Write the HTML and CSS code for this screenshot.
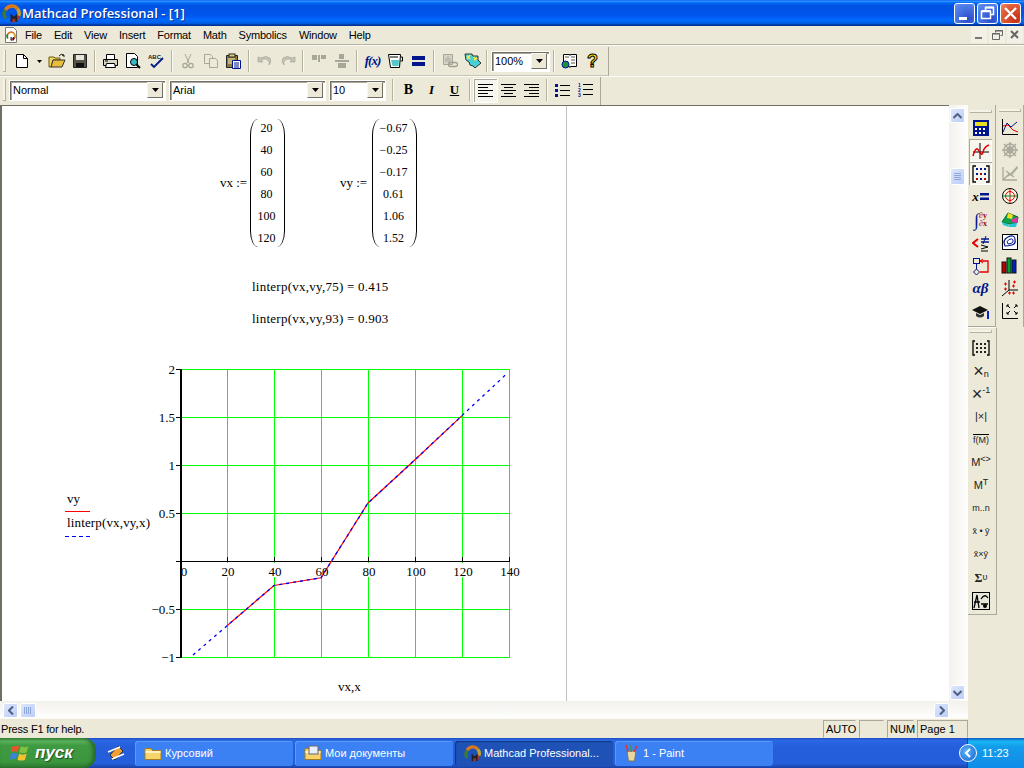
FILE: index.html
```html
<!DOCTYPE html>
<html lang="en">
<head>
  <meta charset="UTF-8">
  <title>Mathcad Professional - [1]</title>
  <link rel="stylesheet" href="styles.css">
</head>
<body>
<svg class="defs" width="0" height="0">
  <symbol id="logo" viewBox="0 0 16 16">
    <path d="M3 12A6 6 0 0 1 3 5" fill="none" stroke="#3a7d2c" stroke-width="3"/>
    <path d="M3 5A6 6 0 0 1 13 4" fill="none" stroke="#d9791e" stroke-width="3"/>
    <path d="M13 4A6 6 0 0 1 14 10" fill="none" stroke="#c9a227" stroke-width="3"/>
    <path d="M14 10A6 6 0 0 1 8 14" fill="none" stroke="#a33" stroke-width="3"/>
    <path d="M8 15V10L10 12L12 10V15" fill="none" stroke="#222" stroke-width="1.6"/>
  </symbol>
  <symbol id="folder" viewBox="0 0 18 16">
    <path d="M1 3.500h6l1.500 2h8.500v9h-16z" fill="#f6d36b" stroke="#a67c1e"/>
    <path d="M1.500 7h15" stroke="#fff2bf" stroke-width="2"/>
  </symbol>
</svg>

<div class="window">
  <!-- Barre de titre -->
  <div class="titlebar">
    <svg class="title-logo" width="19" height="19"><use href="#logo"/></svg>
    <span class="title-text">Mathcad Professional - [1]</span>
    <div class="title-btns">
      <div class="cap-btn"><svg width="21" height="21"><rect x="5" y="14" width="8" height="3" fill="#fff"/></svg></div>
      <div class="cap-btn"><svg width="21" height="21"><path d="M8.500 7.500v-3h8v7h-3M4.500 8.500h9v7h-9z" fill="none" stroke="#fff" stroke-width="1.500"/><path d="M4.500 8h9M8.500 4.500h8" stroke="#fff" stroke-width="2"/></svg></div>
      <div class="cap-btn cap-close"><svg width="21" height="21"><path d="M5 5L16 16M16 5L5 16" stroke="#fff" stroke-width="2.400"/></svg></div>
    </div>
  </div>

  <!-- Menu -->
  <div class="menubar">
    <div class="doc-icon"><svg width="12" height="16"><path d="M.5.500h8l3 3v12h-11z" fill="#fff" stroke="#777"/><use href="#logo" x="1" y="4" width="10" height="10"/></svg></div>
    <span class="menu-item">File</span>
    <span class="menu-item">Edit</span>
    <span class="menu-item">View</span>
    <span class="menu-item">Insert</span>
    <span class="menu-item">Format</span>
    <span class="menu-item">Math</span>
    <span class="menu-item">Symbolics</span>
    <span class="menu-item">Window</span>
    <span class="menu-item">Help</span>
    <div class="mdi-btns">
      <div class="mdi-btn"><svg width="16" height="16"><rect x="4" y="10" width="7" height="2" fill="#777"/></svg></div>
      <div class="mdi-btn"><svg width="16" height="16"><path d="M6.500 5.500v-2h7v5h-2M3.500 6.500h7v6h-7z" fill="none" stroke="#666"/><path d="M3 7h8M6 4h8" stroke="#666"/></svg></div>
      <div class="mdi-btn"><svg width="16" height="16"><path d="M4 4L11 11M11 4L4 11" stroke="#666" stroke-width="2"/></svg></div>
    </div>
  </div>

  <!-- Barre standard -->
  <div class="toolrow row-one">
    <div class="toolbar tb-standard">
      <div class="grip"></div>
      <div class="tool"><svg width="16" height="16"><path d="M2.500 1.500h7l4 4v9h-11z" fill="#fff" stroke="#000"/><path d="M9.500 1.500v4h4" fill="none" stroke="#000"/></svg></div>
      <div class="tool-arrow"><svg width="5" height="3"><path d="M0 0h5L2.500 3z"/></svg></div>
      <div class="tool"><svg width="18" height="16"><path d="M1 4h5l1 1h5v2H5L3 14H1z" fill="#f6d55c" stroke="#6b5a10"/><path d="M3 14l2-7h12l-3 7z" fill="#e8bd3a" stroke="#333"/><path d="M11 3Q13 0 16 2M16 2l-2 .4M16 2v2" fill="none" stroke="#222"/></svg></div>
      <div class="tool"><svg width="16" height="16"><path d="M1.500 1.500h13v13h-13z" fill="#57544a" stroke="#222"/><rect x="4" y="2" width="8" height="5" fill="#e8e6d8"/><rect x="4" y="10" width="8" height="4" fill="#111"/></svg></div>
      <div class="sep"></div>
      <div class="tool"><svg width="17" height="16"><path d="M4.500 1.500h8v5h-8z" fill="#fff" stroke="#000"/><path d="M1.500 6.500h14v6h-14z" fill="#d9d6c8" stroke="#000"/><path d="M4.500 10.500h8l1 4h-10z" fill="#fff" stroke="#000"/><path d="M3 8h3" stroke="#000"/></svg></div>
      <div class="tool"><svg width="17" height="16"><path d="M1.500 .5h8l3 3v11h-11z" fill="#fff" stroke="#000"/><circle cx="9" cy="9" r="3.500" fill="#37b8c4" stroke="#000"/><path d="M11.500 11.500l3.500 3.500" stroke="#000" stroke-width="2"/></svg></div>
      <div class="tool"><svg width="17" height="16"><text class="abc" x="0" y="6">ABC</text><path d="M3 11l3 3 9-9" fill="none" stroke="#001b8a" stroke-width="1.800"/></svg></div>
      <div class="sep"></div>
      <div class="tool"><svg width="16" height="16"><path d="M5 1l4 9M11 1L7 10" stroke="#a8a698" fill="none"/><circle cx="5" cy="12.500" r="2.200" fill="none" stroke="#a8a698" stroke-width="1.300"/><circle cx="11" cy="12.500" r="2.200" fill="none" stroke="#a8a698" stroke-width="1.300"/></svg></div>
      <div class="tool"><svg width="16" height="16"><path d="M1.500 1.500h6l2 2v7h-8z" fill="#ece9d8" stroke="#a8a698"/><path d="M6.500 5.500h6l2 2v7h-8z" fill="#ece9d8" stroke="#a8a698"/></svg></div>
      <div class="tool"><svg width="17" height="17"><path d="M1.500 2.500h11v12h-11z" fill="#8c7a3a" stroke="#222"/><rect x="4" y="1" width="6" height="3" fill="#e0d27a" stroke="#222"/><rect x="3" y="5" width="7" height="6" fill="#c2b477"/><path d="M7.500 7.500h8v8h-8z" fill="#fff" stroke="#00148c"/><path d="M9 10h5M9 12h5M9 14h5" stroke="#00148c" stroke-width="1.200"/></svg></div>
      <div class="sep"></div>
      <div class="tool"><svg width="16" height="14"><path d="M1 3v5h5L4 6q4-2 7 0 2 2 1 5 3-3 1-7-4-3-9 0z" fill="#c6c4b6" stroke="#a09e90" stroke-width=".6"/></svg></div>
      <div class="tool"><svg width="16" height="14"><path d="M15 3v5h-5l2-2q-4-2-7 0-2 2-1 5-3-3-1-7 4-3 9 0z" fill="#c6c4b6" stroke="#a09e90" stroke-width=".6"/></svg></div>
      <div class="sep"></div>
      <div class="tool"><svg width="16" height="14"><path d="M1 1h5v5H1zM7 1h2v7H7zM10 1h5v4h-5z" fill="#a8a698"/></svg></div>
      <div class="tool"><svg width="16" height="16"><path d="M5 1h5v5H5zM1 7h14v2H1zM4 10h8v5H4z" fill="#a8a698"/></svg></div>
      <div class="sep"></div>
      <div class="tool"><span class="fx">f(x)</span></div>
      <div class="tool"><svg width="17" height="16"><path d="M1.500 1.500h12l-1 13h-9z" fill="#fff" stroke="#000"/><path d="M13.500 4h2v4h-2" fill="none" stroke="#000"/><path d="M4 7h8l-.5 6h-6z" fill="#52c8c8"/><path d="M3 4h8" stroke="#000"/></svg></div>
      <div class="tool"><svg width="14" height="12"><rect y="1" width="13" height="4" fill="#00148c"/><rect y="7" width="13" height="4" fill="#00148c"/></svg></div>
      <div class="sep"></div>
      <div class="tool"><svg width="16" height="16"><path d="M1.500 1.500h9v10h-9z" fill="#d5d3c5" stroke="#a8a698"/><path d="M5 4h2M3 6h6M3 8h6" stroke="#a8a698"/><rect x="6.500" y="9.500" width="9" height="4" rx="2" fill="none" stroke="#a09e90" stroke-width="1.300"/></svg></div>
      <div class="tool"><svg width="18" height="16"><path d="M1 1h7l1 2h5v4l3 3-6 5-2-2-3-1-1-3-3-2z" fill="#45d0d8" stroke="#333"/><path d="M3 3l3 3M6 2L3 6M10 4l2 3M10 7l3-2" stroke="#ffe23c" stroke-width="1.600"/></svg></div>
      <div class="sep sep-zoom"></div>
      <div class="combo combo-zoom"><span class="combo-value">100%</span><div class="combo-btn"><svg width="7" height="4"><path d="M0 0h7L3.500 4z"/></svg></div></div>
      <div class="sep sep-after"></div>
      <div class="tool"><svg width="17" height="16"><path d="M2.500 1.500h6l.5 1 .5-1h6v12h-6l-.500 1-.500-1h-6z" fill="#fff" stroke="#000"/><path d="M10 4h4M10 7h4M10 10h4M4 4h4" stroke="#555"/><circle cx="4.500" cy="11.500" r="3.500" fill="#1a8f3c" stroke="#00148c"/></svg></div>
      <div class="tool"><span class="help-q">?</span></div>
    </div>
  </div>

  <!-- Barre de formatage -->
  <div class="toolrow row-two">
    <div class="toolbar tb-format">
      <div class="grip"></div>
      <div class="combo combo-style"><span class="combo-value">Normal</span><div class="combo-btn"><svg width="7" height="4"><path d="M0 0h7L3.500 4z"/></svg></div></div>
      <div class="combo combo-style"><span class="combo-value">Arial</span><div class="combo-btn"><svg width="7" height="4"><path d="M0 0h7L3.500 4z"/></svg></div></div>
      <div class="combo combo-size"><span class="combo-value">10</span><div class="combo-btn"><svg width="7" height="4"><path d="M0 0h7L3.500 4z"/></svg></div></div>
      <div class="sep"></div>
      <div class="tool"><span class="fmt fmt-b">B</span></div>
      <div class="tool"><span class="fmt fmt-i">I</span></div>
      <div class="tool"><span class="fmt fmt-u">U</span></div>
      <div class="sep"></div>
      <div class="tool tool-on"><svg width="15" height="13"><path d="M0 .5h15M0 3.500h10M0 6.500h15M0 9.500h10M0 12.500h15" stroke="#000"/></svg></div>
      <div class="tool"><svg width="15" height="13"><path d="M0 .5h15M3 3.500h9M0 6.500h15M3 9.500h9M0 12.500h15" stroke="#000"/></svg></div>
      <div class="tool"><svg width="15" height="13"><path d="M0 .5h15M5 3.500h10M0 6.500h15M5 9.500h10M0 12.500h15" stroke="#000"/></svg></div>
      <div class="sep"></div>
      <div class="tool"><svg width="15" height="13"><path d="M0 0h3v3H0zM0 5h3v3H0zM0 10h3v3H0z" fill="#00148c"/><path d="M5 1.500h10M5 6.500h10M5 11.500h10" stroke="#000"/></svg></div>
      <div class="tool"><svg width="15" height="14"><text class="num-list" x="0" y="4">1</text><text class="num-list" x="0" y="9">2</text><text class="num-list" x="0" y="14">3</text><path d="M5 1.500h10M5 6.500h10M5 11.500h10" stroke="#000"/></svg></div>
    </div>
  </div>

  <div class="main">
    <div class="main-left">
      <div class="workspace">
        <div class="doc">
          <div class="region region-vx">
            <span class="assign">vx :=</span>
            <div class="matrix matrix-vx">
              <div class="paren paren-l"></div>
              <div class="cells">
                <span>20</span><span>40</span><span>60</span><span>80</span><span>100</span><span>120</span>
              </div>
              <div class="paren paren-r"></div>
            </div>
          </div>
          <div class="region region-vy">
            <span class="assign">vy :=</span>
            <div class="matrix matrix-vy">
              <div class="paren paren-l"></div>
              <div class="cells">
                <span>−0.67</span><span>−0.25</span><span>−0.17</span><span>0.61</span><span>1.06</span><span>1.52</span>
              </div>
              <div class="paren paren-r"></div>
            </div>
          </div>
          <div class="expr expr-one">linterp(vx,vy,75) = 0.415</div>
          <div class="expr expr-two">linterp(vx,vy,93) = 0.903</div>

          <!-- Graphique : les coordonnées du viewBox sont celles de l'écran -->
          <svg class="plot" width="500" height="345" viewBox="50 360 500 345">
            <g class="grid" shape-rendering="crispEdges">
              <path d="M180 369.500H509.500M180 417.500H509.500M180 465.500H509.500M180 513.500H509.500M180 609.500H509.500M180 657.500H509.500"/>
              <path d="M227.500 369V657M274.500 369V657M321.500 369V657M368.500 369V657M415.500 369V657M462.500 369V657M509.500 369V657"/>
            </g>
            <g class="axis" shape-rendering="crispEdges">
              <path class="axis-y" d="M181 369V658"/>
              <path d="M176 369.500H181M176 417.500H181M176 465.500H181M176 513.500H181M176 609.500H181M176 657.500H181"/>
              <path d="M176 561.500H509.500"/>
              <path d="M227.500 557V562M274.500 557V562M321.500 557V562M368.500 557V562M415.500 557V562M462.500 557V562M509.500 557V562"/>
            </g>
            <g class="x-back">
              <rect x="218" y="563" width="20" height="14"/><rect x="265" y="563" width="20" height="14"/>
              <rect x="312" y="563" width="20" height="14"/><rect x="359" y="563" width="20" height="14"/>
              <rect x="403" y="563" width="26" height="14"/><rect x="450" y="563" width="26" height="14"/>
            </g>
            <polyline class="trace-red" points="227,625.800 274,585.500 321,577.800 368,503 415,459.700 462,415.600"/>
            <polyline class="trace-blue" points="193,655 227,625.800 274,585.500 321,577.800 368,503 415,459.700 462,415.600 507,373.500"/>
            <g class="plot-text y-labels">
              <text x="175" y="374">2</text><text x="175" y="422">1.5</text><text x="175" y="470">1</text>
              <text x="175" y="518">0.5</text><text x="175" y="614">−0.5</text><text x="175" y="662">−1</text>
            </g>
            <g class="plot-text x-labels">
              <text x="184" y="576">0</text><text x="228" y="576">20</text><text x="275" y="576">40</text>
              <text x="322" y="576">60</text><text x="369" y="576">80</text><text x="416" y="576">100</text>
              <text x="463" y="576">120</text><text x="510" y="576">140</text>
            </g>
            <text class="plot-text" x="67" y="503">vy</text>
            <path class="legend-red" d="M65 511.500H90"/>
            <text class="plot-text legend-name" x="67" y="527">linterp(vx,vy,x)</text>
            <path class="legend-blue" d="M65 536.500H90"/>
            <text class="plot-text" x="338" y="691">vx,x</text>
          </svg>
        </div>
        <div class="vscroll">
          <div class="sb-btn"><svg width="9" height="6"><path d="M.5 5L4.500 1L8.500 5" fill="none" stroke="#4d6185" stroke-width="2"/></svg></div>
          <div class="sb-thumb thumb-v"><svg width="7" height="8"><path d="M0 .5h7M0 2.500h7M0 4.500h7M0 6.500h7" stroke="#8fa6d8"/></svg></div>
          <div class="sb-btn btn-down"><svg width="9" height="6"><path d="M.5 1L4.500 5L8.500 1" fill="none" stroke="#4d6185" stroke-width="2"/></svg></div>
        </div>
      </div>
      <div class="hscroll">
        <div class="sb-btn"><svg width="6" height="9"><path d="M5 .5L1 4.500L5 8.500" fill="none" stroke="#4d6185" stroke-width="2"/></svg></div>
        <div class="sb-thumb thumb-h"><svg width="8" height="7"><path d="M.5 0v7M2.500 0v7M4.500 0v7M6.500 0v7" stroke="#8fa6d8"/></svg></div>
        <div class="sb-btn btn-right"><svg width="6" height="9"><path d="M1 .5L5 4.500L1 8.500" fill="none" stroke="#4d6185" stroke-width="2"/></svg></div>
      </div>
      <div class="statusbar">
        <span class="status-msg">Press F1 for help.</span>
        <span class="panel panel-auto">AUTO</span>
        <span class="panel panel-blank"></span>
        <span class="panel panel-num">NUM</span>
        <span class="panel panel-page">Page 1</span>
      </div>
    </div>

    <!-- Barres flottantes à droite -->
    <div class="side">
      <div class="side-top">
        <div class="palette">
          <div class="pal-grip"></div>
          <div class="pal-btn"><svg width="18" height="18"><rect x="1" y="1" width="16" height="16" fill="#00148c"/><rect x="3" y="3" width="12" height="4" fill="#e8e020"/><path d="M3 9h2v2H3zM7 9h2v2H7zM11 9h2v2h-2zM3 13h2v2H3zM7 13h2v2H7zM11 13h2v2h-2z" fill="#fff"/></svg></div>
          <div class="pal-btn pal-on"><svg width="18" height="18"><path d="M8 1V17M1 10H17" stroke="#000"/><path d="M1 14Q4 3 7 9T11 10 17 3" fill="none" stroke="#e00000" stroke-width="1.500"/></svg></div>
          <div class="pal-btn pal-on"><svg width="18" height="18"><path d="M4 1H1V17H4M14 1H17V17H14" fill="none" stroke="#000" stroke-width="1.300"/><path d="M4 3h2v2H4zM8 3h2v2H8zM12 3h2v2h-2zM4 8h2v2H4zM12 8h2v2h-2zM8 13h2v2H8z" fill="#00148c"/><path d="M8 8h2v2H8zM4 13h2v2H4zM12 13h2v2h-2z" fill="#b00000"/></svg></div>
          <div class="pal-btn"><span class="pal-xeq">x</span><svg width="9" height="7"><rect width="9" height="2.500" fill="#00148c"/><rect y="4.500" width="9" height="2.500" fill="#00148c"/></svg></div>
          <div class="pal-btn"><span class="pal-int">∫</span><span class="pal-frac"><span>∂y</span><span>∂x</span></span></div>
          <div class="pal-btn"><svg width="18" height="18"><path d="M6 5L1 9L6 13" fill="none" stroke="#e00000" stroke-width="2"/><path d="M9 5h8M9 8h8" stroke="#00148c" stroke-width="1.500"/><path d="M14 2L11 10" stroke="#00148c"/><path d="M9 11l7 2-7 2M9 17h7" fill="none" stroke="#000"/></svg></div>
          <div class="pal-btn"><svg width="18" height="18"><rect x="1.500" y="1.500" width="6" height="5" fill="none" stroke="#00148c"/><path d="M4.500 12l3 3-3 3-3-3z" fill="none" stroke="#00148c"/><path d="M4.500 6.500V12" stroke="#00148c"/><path d="M8 4h8V15H8" fill="none" stroke="#e00000" stroke-width="1.300"/><path d="M11 2L8 4L11 6" fill="none" stroke="#e00000"/></svg></div>
          <div class="pal-btn"><span class="pal-greek">αβ</span></div>
          <div class="pal-btn"><svg width="18" height="18"><path d="M0 7L8 3L16 7L8 11z" fill="#111"/><path d="M4 10v3q4 3 8 0v-3l-4 2z" fill="#333"/><path d="M15 8v8h2V8z" fill="#0022cc"/></svg></div>
        </div>
        <div class="palette">
          <div class="pal-grip"></div>
          <div class="pal-btn"><svg width="18" height="18"><path d="M1.500 1V16.500H17" fill="none" stroke="#000"/><path d="M2 14L6 5L10 9L16 4" fill="none" stroke="#00148c"/><path d="M2 8L7 7L12 12L17 14" fill="none" stroke="#e00000"/></svg></div>
          <div class="pal-btn"><svg width="18" height="18"><g fill="none" stroke="#aaa89a" stroke-width="1.300"><circle cx="9" cy="9" r="6"/><circle cx="9" cy="9" r="3"/><path d="M9 1V17M1 9H17M3 3L15 15M15 3L3 15"/></g></svg></div>
          <div class="pal-btn"><svg width="18" height="18"><g fill="none" stroke="#aaa89a" stroke-width="1.300"><path d="M2 3V16H16M2 16L9 9M5 7L13 13M5 13L12 9"/></g><path d="M9 10L16 2L17 4L10 12z" fill="#aaa89a"/></svg></div>
          <div class="pal-btn"><svg width="18" height="18"><circle cx="9" cy="9" r="7.500" fill="#fff8e8" stroke="#000"/><circle cx="9" cy="9" r="4.500" fill="none" stroke="#e00000"/><path d="M9 1.500V16.500" stroke="#e00000"/><path d="M1.500 9H16.500" stroke="#008a20"/></svg></div>
          <div class="pal-btn"><svg width="18" height="18"><path d="M1 12L7 3L17 7L16 13L7 14z" fill="#0fa04a" stroke="#063"/><path d="M7 3L12 5L11 9L6 8z" fill="#f0e020"/><path d="M11 9L17 7L16 13L11 12z" fill="#d83aa0"/><path d="M1 12L7 14L8 17L2 15z" fill="#20c8d8"/><path d="M8 14l8-1-1 4-7 0z" fill="#20c8d8"/></svg></div>
          <div class="pal-btn"><svg width="18" height="18"><rect x="1.500" y="1.500" width="15" height="15" fill="#fff" stroke="#000"/><path d="M4 13Q1 7 7 4T14 6 11 12 4 13z" fill="none" stroke="#00148c" stroke-width="1.200"/><path d="M7 11Q5 8 8 6.500T12 7 10 10.500z" fill="none" stroke="#00148c"/></svg></div>
          <div class="pal-btn"><svg width="18" height="18"><rect x="1" y="6" width="4" height="11" fill="#c00000" stroke="#111"/><rect x="6" y="2" width="4" height="15" fill="#00a030" stroke="#111"/><rect x="11" y="4" width="4" height="13" fill="#0020c0" stroke="#111"/></svg></div>
          <div class="pal-btn"><svg width="18" height="18"><path d="M8 1V11H17M8 11L1 17" fill="none" stroke="#000"/><path d="M3 5h3M4.500 3.500v3M12 3h3M13.500 1.500v3M11 7h3M12.500 5.500v3M3 10h3M4.500 8.500v3M11 14h3M12.500 12.500v3M7 14h3M8.500 12.500v3" stroke="#e00000"/></svg></div>
          <div class="pal-btn"><svg width="18" height="18"><path d="M1.500 1V16.500H17" fill="none" stroke="#000"/><path d="M5 4L8 7M5 4h2M5 4v2M15 4L12 7M15 4h-2M15 4v2M5 13L8 10M5 13h2M5 13v-2M15 13L12 10M15 13h-2M15 13v-2" stroke="#000" fill="none" transform="translate(1 -1)"/></svg></div>
        </div>
      </div>
      <div class="palette palette-matrix">
        <div class="pal-grip"></div>
        <div class="pal-btn"><svg width="18" height="18"><path d="M3 2H1V16H3M15 2H17V16H15" fill="none" stroke="#000" stroke-width="1.300"/><path d="M4 4h2v2H4zM8 4h2v2H8zM12 4h2v2h-2zM4 8h2v2H4zM8 8h2v2H8zM12 8h2v2h-2zM4 12h2v2H4zM8 12h2v2H8zM12 12h2v2h-2z" fill="#222"/></svg></div>
        <div class="pal-btn"><span class="sym sym-big">×</span><sub class="sym-sub">n</sub></div>
        <div class="pal-btn"><span class="sym sym-big">×</span><sup class="sym-sup">-1</sup></div>
        <div class="pal-btn"><span class="sym">|×|</span></div>
        <div class="pal-btn"><span class="sym sym-arrow">f(M)</span></div>
        <div class="pal-btn"><span class="sym">M</span><sup class="sym-sup">&lt;&gt;</sup></div>
        <div class="pal-btn"><span class="sym">M</span><sup class="sym-sup">T</sup></div>
        <div class="pal-btn"><span class="sym sym-small">m..n</span></div>
        <div class="pal-btn"><span class="sym sym-small">x̄ • ȳ</span></div>
        <div class="pal-btn"><span class="sym sym-small">x̄×ȳ</span></div>
        <div class="pal-btn"><span class="sym sym-sigma">Σ</span><span class="sym sym-small">υ</span></div>
        <div class="pal-btn"><svg width="18" height="18"><rect x=".5" y=".5" width="17" height="17" fill="#e8e6d8" stroke="#000"/><path d="M2 16L5 3L7 16M9 7Q13 1 16 6M9 12h7M2 10h6" fill="none" stroke="#000" stroke-width="1.300"/><circle cx="13" cy="14" r="2" fill="#000"/></svg></div>
      </div>
    </div>
  </div>

  <!-- Barre des tâches -->
  <div class="taskbar">
    <div class="start">
      <svg width="20" height="20" viewBox="0 0 24 22"><path d="M2 4Q6 1 11 3L9 10Q5 8 1 10z" fill="#e8552a"/><path d="M13 3Q17 5 22 3L20 10Q16 12 11 10z" fill="#7fc241"/><path d="M1 12Q4 10 9 12L7 19Q3 17 0 19z" fill="#3a82de"/><path d="M11 12Q15 14 20 12L18 19Q14 21 9 19z" fill="#f2c230"/></svg>
      <span class="start-text">пуск</span>
    </div>
    <div class="quick"><svg width="18" height="18"><path d="M3 11L11 2L16 7L8 16z" fill="#f0a030" stroke="#333"/><path d="M1 8L13 3M5 15L17 10" stroke="#fff" stroke-width="1.500"/></svg></div>
    <div class="task"><svg width="18" height="16"><use href="#folder"/></svg><span>Курсовий</span></div>
    <div class="task"><svg width="18" height="16"><use href="#folder"/><rect x="5" y="1" width="9" height="8" fill="#e8eefc" stroke="#667"/></svg><span>Мои документы</span></div>
    <div class="task task-active"><svg width="17" height="17"><use href="#logo"/></svg><span>Mathcad Professional...</span></div>
    <div class="task"><svg width="16" height="18"><path d="M3 7h9l-1.500 10h-6z" fill="#e8d8a0" stroke="#776"/><path d="M4 8L2 1M7 8V1M10 8l3-6" stroke="#d33" stroke-width="1.500"/><path d="M7 8V1" stroke="#2a7" stroke-width="1.500"/></svg><span>1 - Paint</span></div>
    <div class="tray">
      <div class="tray-chevron"><svg width="8" height="10"><path d="M6 1L2 5L6 9" fill="none" stroke="#fff" stroke-width="2"/></svg></div>
      <span class="clock">11:23</span>
    </div>
  </div>
</div>
</body>
</html>
```

FILE: styles.css
```css
* {
  box-sizing: border-box;
}

html, body {
  margin: 0;
  width: 1024px;
  height: 768px;
  overflow: hidden;
}

body {
  font-family: "Liberation Sans", "Noto Sans", sans-serif;
  font-size: 11px;
  color: #000;
  background-color: #ece9d8;
}

.defs {
  position: absolute;
}

svg {
  display: block;
  flex: none;
}

.window {
  display: flex;
  flex-direction: column;
  height: 768px;
}

/* Barre de titre */
.titlebar {
  height: 26px;
  display: flex;
  align-items: center;
  padding-left: 2px;
  flex: none;
  background: linear-gradient(#0058ee 0%, #3593ff 4%, #288eff 6%, #127dff 8%, #036ffc 10%, #0262ee 14%, #0057e5 20%, #0054e3 24%, #0055eb 56%, #005bf5 66%, #026afe 76%, #0062ef 86%, #0052d6 92%, #0040ab 94%, #003092 100%);
}

.title-text {
  margin-left: 1px;
  color: #fff;
  font-family: "Open Sans", sans-serif;
  font-weight: 600;
  font-size: 13px;
  text-shadow: 1px 1px 0 #0f2f8a;
}

.title-btns {
  margin-left: auto;
  margin-right: 3px;
  display: flex;
  gap: 2px;
}

.cap-btn {
  width: 21px;
  height: 21px;
  border: 1px solid #fff;
  border-radius: 3px;
  background: radial-gradient(circle at 70% 80%, #2a4cc8, #4f7de8 70%, #6a92ee);
  display: flex;
  align-items: center;
  justify-content: center;
}

.cap-close {
  background: radial-gradient(circle at 80% 80%, #c33014, #e2603c 70%, #ea8a68);
}

/* Menu */
.menubar {
  height: 20px;
  display: flex;
  align-items: center;
  flex: none;
  padding-left: 5px;
  padding-bottom: 2px;
  border-bottom: 1px solid #fbfaf5;
  box-shadow: inset 0 -1px 0 #b5b2a0;
}

.doc-icon {
  width: 14px;
}

.menu-item {
  padding: 0 6px;
  letter-spacing: -.2px;
}

.mdi-btns {
  margin-left: auto;
  margin-right: 1px;
  display: flex;
  gap: 2px;
}

.mdi-btn {
  width: 16px;
  height: 17px;
  background-color: #f3f1e6;
  display: flex;
  align-items: center;
  justify-content: center;
}

/* Barres d'outils */
.toolrow {
  display: flex;
  flex: none;
}

.row-one {
  height: 30px;
  padding-top: 1px;
}

.row-two {
  height: 29px;
  border-top: 1px solid #fbfaf5;
}

.toolbar {
  display: flex;
  align-items: center;
  height: 100%;
  padding-left: 3px;
  border-right: 1px solid #aca899;
}

.tb-standard {
  width: 609px;
  border-bottom: 1px solid #c8c5b4;
}

.tb-format {
  width: 601px;
  padding-bottom: 2px;
}

.grip {
  width: 3px;
  height: 22px;
  margin-right: 4px;
  background-color: #f5f3e8;
  border-right: 1px solid #b5b2a0;
  border-bottom: 1px solid #b5b2a0;
}

.tb-format .grip {
  margin-right: 3px;
}

.tool {
  width: 23px;
  height: 23px;
  display: flex;
  align-items: center;
  justify-content: center;
  flex: none;
}

.tool-arrow {
  width: 12px;
  display: flex;
  justify-content: center;
  flex: none;
}

.tool-on {
  background-color: #f6f5ee;
  outline: 1px solid #fff;
  box-shadow: inset 1px 1px 0 #aca899;
}

.sep {
  width: 2px;
  height: 22px;
  margin: 0 3px;
  border-left: 1px solid #b5b2a0;
  border-right: 1px solid #fbfaf5;
  flex: none;
}

.sep-zoom {
  margin: 0 3px 0 2px;
}

.sep-after {
  margin: 0 3px 0 3px;
}

.combo {
  height: 21px;
  display: flex;
  align-items: center;
  background-color: #fff;
  border: 1px solid #fff;
  box-shadow: inset 1px 1px 0 #716f64, inset 2px 2px 0 #aca899;
  padding: 2px 2px 2px 2px;
  margin-right: 3px;
  flex: none;
}

.combo-style {
  width: 157px;
}

.combo-size {
  width: 57px;
}

.combo-zoom {
  width: 59px;
  margin-right: 0;
}

.combo-value {
  flex: 1;
  padding-left: 1px;
}

.combo-btn {
  width: 16px;
  height: 16px;
  background-color: #ece9d8;
  border: 1px solid;
  border-color: #f8f7f0 #716f64 #716f64 #f8f7f0;
  display: flex;
  align-items: center;
  justify-content: center;
}

.abc {
  font-size: 6px;
  font-weight: 700;
  fill: #222;
}

.fx {
  font-family: "Liberation Serif", serif;
  font-style: italic;
  font-weight: 700;
  font-size: 13px;
  letter-spacing: -1px;
  color: #00148c;
}

.help-q {
  font-weight: 700;
  font-size: 18px;
  line-height: 1;
  color: #ffe800;
  -webkit-text-stroke: 1px #000;
}

.fmt {
  font-family: "Liberation Serif", serif;
  font-weight: 700;
  font-size: 13px;
}

.fmt-b {
  font-size: 14px;
}

.fmt-i {
  font-style: italic;
}

.fmt-u {
  text-decoration: underline;
}

.num-list {
  font-size: 5px;
  font-weight: 700;
  fill: #00148c;
}

/* Zone principale */
.main {
  flex: 1;
  display: flex;
  min-height: 0;
}

.main-left {
  width: 968px;
  display: flex;
  flex-direction: column;
}

.workspace {
  flex: 1;
  display: flex;
  min-height: 0;
}

.doc {
  flex: 1;
  position: relative;
  overflow: hidden;
  background-color: #fff;
  box-shadow: inset 2px 1px 0 #716f64;
}

/* Limite de page */
.doc::after {
  content: "";
  position: absolute;
  left: 566px;
  top: 1px;
  bottom: 0;
  width: 1px;
  background-color: #c0c0c0;
}

.region, .expr {
  position: absolute;
  font-family: "Liberation Serif", serif;
  font-size: 13px;
  display: flex;
  align-items: center;
}

.region-vx {
  left: 220px;
  top: 14px;
}

.region-vy {
  left: 340px;
  top: 14px;
}

.assign {
  width: 30px;
  white-space: nowrap;
}

.matrix {
  display: flex;
  height: 128px;
  font-size: 12px;
}

.matrix-vx {
  width: 35px;
}

.matrix-vy {
  margin-left: 2px;
  width: 45px;
}

.cells {
  flex: 1;
  display: flex;
  flex-direction: column;
  align-items: center;
  margin: -2px -3px 0 -5px;
}

.cells span {
  height: 22px;
  line-height: 22px;
}

.paren {
  width: 8px;
  flex: none;
  border: 0 solid #000;
}

.paren-l {
  border-left-width: 1px;
  border-radius: 8px 0 0 8px / 16px 0 0 16px;
}

.paren-r {
  border-right-width: 1px;
  border-radius: 0 8px 8px 0 / 0 16px 16px 0;
}

.expr {
  left: 252px;
  white-space: nowrap;
  letter-spacing: .25px;
}

.expr-one {
  top: 174px;
}

.expr-two {
  top: 206px;
}

.plot {
  position: absolute;
  left: 50px;
  top: 255px;
}

.grid path {
  fill: none;
  stroke: #00ff00;
  stroke-width: 1;
}

.axis path {
  fill: none;
  stroke: #000;
  stroke-width: 1;
}

.axis .axis-y {
  stroke-width: 2;
}

.x-back rect {
  fill: #fff;
}

.trace-red {
  fill: none;
  stroke: #ff0000;
  stroke-width: 1.200;
}

.trace-blue {
  fill: none;
  stroke: #0000ff;
  stroke-width: 1.300;
  stroke-dasharray: 3 4;
}

.legend-red {
  stroke: #ff0000;
  fill: none;
}

.legend-blue {
  stroke: #0000ff;
  fill: none;
  stroke-dasharray: 4 3;
}

.plot-text {
  font-family: "Liberation Serif", serif;
  font-size: 13px;
  fill: #000;
}

.legend-name {
  letter-spacing: .15px;
}

.y-labels {
  text-anchor: end;
}

.x-labels {
  text-anchor: middle;
}

/* Ascenseurs */
.vscroll {
  width: 19px;
  display: flex;
  flex-direction: column;
  align-items: center;
  padding: 3px 2px 0 0;
  background: linear-gradient(90deg, #f3f1ec, #fefefe);
}

.hscroll {
  height: 17px;
  display: flex;
  align-items: flex-end;
  padding-left: 3px;
  padding-right: 19px;
  flex: none;
  background: linear-gradient(#f3f1ec, #fefefe);
}

.sb-btn, .sb-thumb {
  width: 15px;
  height: 15px;
  border: 1px solid #fff;
  border-radius: 2px;
  background: linear-gradient(135deg, #dde6fb, #bccdf7);
  display: flex;
  align-items: center;
  justify-content: center;
  flex: none;
}

.thumb-v {
  height: 17px;
  margin-top: 45px;
}

.thumb-h {
  width: 16px;
  margin-left: 2px;
}

.btn-down {
  margin-top: auto;
  margin-bottom: 1px;
}

.btn-right {
  margin-left: auto;
}

/* Barre d'état */
.statusbar {
  height: 20px;
  display: flex;
  align-items: stretch;
  flex: none;
  border-top: 1px solid #fbfaf5;
  padding-top: 1px;
}

.status-msg {
  flex: 1;
  padding-left: 1px;
  line-height: 18px;
  letter-spacing: -.2px;
}

.panel {
  margin-left: 3px;
  padding-left: 2px;
  line-height: 16px;
  border: 1px solid;
  border-color: #aca899 #ece9d8 #ece9d8 #aca899;
}

.panel-auto {
  width: 33px;
}

.panel-blank {
  width: 25px;
}

.panel-num {
  width: 27px;
}

.panel-page {
  width: 51px;
  border-right-color: #aca899;
}

/* Palettes */
.side {
  flex: 1;
  display: flex;
  flex-direction: column;
}

.side-top {
  display: flex;
}

.palette {
  width: 28px;
  height: 222px;
  border-right: 1px solid #aca899;
  border-bottom: 1px solid #aca899;
  display: flex;
  flex-direction: column;
  align-items: center;
  padding-right: 2px;
}

.palette + .palette {
  border-bottom: 0;
  padding-right: 0;
}

.palette + .palette .pal-grip {
  margin-top: 4px;
}

.palette-matrix {
  width: 29px;
  height: 288px;
  border-top: 1px solid #fbfaf5;
}

.palette-matrix .pal-grip {
  margin-top: 2px;
}

.pal-grip {
  width: 22px;
  height: 3px;
  margin: 5px 0 3px;
  flex: none;
  background-color: #f5f3e8;
  border-right: 1px solid #b5b2a0;
  border-bottom: 1px solid #b5b2a0;
}

.pal-btn {
  width: 23px;
  height: 23px;
  display: flex;
  align-items: center;
  justify-content: center;
  flex: none;
  line-height: 1;
}

.pal-on {
  background-color: #f6f5ee;
  box-shadow: inset 1px 1px 0 #aca899, inset -1px -1px 0 #fff;
}

.pal-xeq {
  font-family: "Liberation Serif", serif;
  font-style: italic;
  font-weight: 700;
  font-size: 13px;
  margin-right: 1px;
}

.pal-int {
  font-family: "Liberation Serif", serif;
  font-size: 18px;
  color: #00148c;
}

.pal-frac {
  display: flex;
  flex-direction: column;
  font-family: "Liberation Serif", serif;
  font-size: 8px;
  font-weight: 700;
  color: #a00000;
}

.pal-greek {
  font-family: "Liberation Serif", serif;
  font-style: italic;
  font-weight: 700;
  font-size: 15px;
  color: #00148c;
}

.sym {
  font-size: 11px;
  color: #222;
}

.sym-big {
  font-size: 18px;
}

.sym-sub, .sym-sup {
  font-size: 9px;
  line-height: 1;
  color: #222;
}

.sym-sub {
  align-self: flex-end;
  margin-bottom: 3px;
}

.sym-sup {
  align-self: flex-start;
  margin-top: 4px;
}

.sym-small {
  font-size: 9px;
}

.sym-arrow {
  font-size: 9px;
  border-top: 1px solid #000;
  padding-top: 1px;
}

.sym-sigma {
  font-family: "Liberation Serif", serif;
  font-weight: 700;
  font-size: 12px;
}

/* Barre des tâches */
.taskbar {
  height: 30px;
  display: flex;
  align-items: center;
  flex: none;
  background: linear-gradient(#1f4fc4 0%, #2a68e4 8%, #245edb 30%, #245edb 85%, #1941a5 100%);
  color: #fff;
}

.start {
  width: 96px;
  height: 30px;
  display: flex;
  align-items: center;
  gap: 5px;
  padding-left: 10px;
  border-radius: 0 12px 12px 0;
  background: linear-gradient(#3a8f3c 0%, #5eb35f 10%, #3f9a41 25%, #3c963e 80%, #2d7c30 100%);
  box-shadow: inset -3px 0 4px #24662a;
}

.start-text {
  font-style: italic;
  font-weight: 700;
  font-size: 17px;
  text-shadow: 1px 1px 1px #1d4f20;
}

.quick {
  width: 39px;
  display: flex;
  justify-content: center;
}

.task {
  width: 158px;
  height: 25px;
  margin-right: 2px;
  padding-left: 9px;
  display: flex;
  align-items: center;
  gap: 3px;
  flex: none;
  white-space: nowrap;
  border-radius: 3px;
  background-color: #3c81f3;
  box-shadow: inset 1px 1px 0 #5c99f7;
}

.task-active {
  background-color: #1e52b7;
  box-shadow: inset 1px 1px 1px #12357e;
}

.tray {
  margin-left: auto;
  width: 57px;
  height: 30px;
  display: flex;
  align-items: center;
  background: linear-gradient(#0c59b9 0%, #139ee9 8%, #18b5f2 12%, #139beb 30%, #1290e8 80%, #0d8dea 100%);
  border-left: 1px solid #1042af;
}

.tray-chevron {
  width: 18px;
  height: 18px;
  margin-left: -9px;
  border-radius: 50%;
  border: 1px solid #fff;
  background: radial-gradient(circle at 40% 40%, #5cb4f6, #1560cf);
  display: flex;
  align-items: center;
  justify-content: center;
  flex: none;
}

.clock {
  margin-left: 5px;
}
```
